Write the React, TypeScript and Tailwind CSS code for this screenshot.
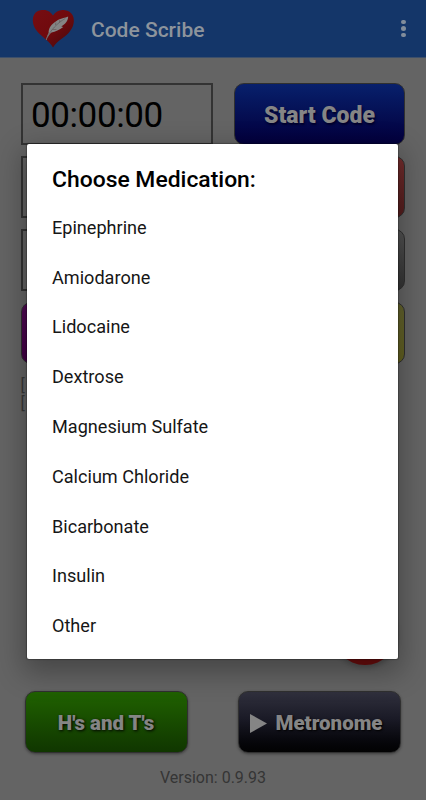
import React from "react";

const medications = [
  "Epinephrine",
  "Amiodarone",
  "Lidocaine",
  "Dextrose",
  "Magnesium Sulfate",
  "Calcium Chloride",
  "Bicarbonate",
  "Insulin",
  "Other",
];

function HeartLogo() {
  return (
    <svg className="ml-8 h-[38px] w-[43px] shrink-0" viewBox="0 0 44 38" preserveAspectRatio="none">
      <defs>
        <linearGradient id="heart" x1="0" y1="0" x2="1" y2="1">
          <stop offset="0" stopColor="#760d12" />
          <stop offset="0.5" stopColor="#700a0d" />
          <stop offset="1" stopColor="#420a0c" />
        </linearGradient>
      </defs>
      <path
        d="M21.5 37.5C18 31 11 28 5 21C-1 14-.5 4 6 1C12-1.5 18 0 21.5 5.5C25 0 32-1.5 38 1.5C44 5 44.5 14 39 21C34 28 26 30 21.5 37.5Z"
        fill="url(#heart)"
      />
      <path d="M14.2 30C15 27 15.8 25 17 23C16.8 18 20 14 25 11C29 8 34 8 37 6.5C37 11 34 14 30 16.5L32 17C28 20 24 21.5 20 22.5C17.5 24.5 16 27 14.8 30Z" fill="#858585" />
      <path d="M15 28.5C19 20 26 13 34 8.5" fill="none" stroke="#555" strokeWidth="0.6" />
      <path d="M24 15l.5-2.5M28 12.5l.5-2.5M21 19.5l4 0" stroke="#5a4545" strokeWidth="0.5" />
    </svg>
  );
}

function Header() {
  return (
    <header className="flex h-[58px] items-center border-b border-[#3c4f6b] bg-[#143669]">
      <HeartLogo />
      <h1 className="ml-4 flex-1 pt-[3px] text-[21px] leading-6 font-medium text-[#8d949c]">Code Scribe</h1>
      <div className="mr-[20.5px] flex flex-col gap-[2px]">
        <i className="size-[4.5px] rounded-full bg-[#818d9b]" />
        <i className="size-[4.5px] rounded-full bg-[#818d9b]" />
        <i className="size-[4.5px] rounded-full bg-[#818d9b]" />
      </div>
    </header>
  );
}

const action = "flex h-[62px] items-center justify-center rounded-[10px] border border-[#303030] font-black text-[#858585]";
const field = "h-[62px] border-2 border-[#333]";

function MedicationDialog() {
  return (
    <section
      role="dialog"
      className="absolute top-[144px] left-[27px] h-[514.5px] w-[371px] rounded-[2px] bg-white px-[25px] pt-[20px] text-black shadow-[0_10px_28px_4px_rgba(0,0,0,0.3),0_0_1px_1px_rgba(0,0,0,0.25)]"
    >
      <h2 className="h-[38.5px] text-[22.9px] leading-[31px] font-medium whitespace-nowrap">Choose Medication:</h2>
      <ul>
        {medications.map((name) => (
          <li key={name} className="flex h-[49.8px] items-center text-[18.1px] text-[#161616]">
            {name}
          </li>
        ))}
      </ul>
    </section>
  );
}

export default function App() {
  return (
    <main className="relative flex h-[800px] w-[426px] flex-col overflow-hidden bg-[#646464] font-['Roboto',sans-serif]">
      <Header />
      <div className="mt-[25px] grid grid-cols-[192px_171px] gap-x-[21px] gap-y-[11px] pl-[21px]">
        <div className={`${field} flex items-center pt-[4px] pl-[8px] text-[35px] tracking-[-0.4px] text-black`}>00:00:00</div>
        <button className={`${action} bg-linear-to-b from-[#08206c] to-[#03003c] pt-[4px] text-[23px] [text-shadow:1px_2px_2px_#00002a]`}>
          Start Code
        </button>
        <div className={field} />
        <div className={`${action} bg-linear-to-b from-[#742d2d] to-[#541d1d]`} />
        <div className={field} />
        <div className={`${action} bg-linear-to-b from-[#535353] to-[#343434]`} />
        <div className={`${action} bg-linear-to-b from-[#500a54] to-[#420045]`} />
        <div className={`${action} bg-linear-to-b from-[#62622d] to-[#626020]`} />
      </div>
      <div className="mt-[13px] pl-[20.5px] text-[16px] leading-[18px] text-[#373737]">
        <p>[</p>
        <p>[</p>
      </div>
      <div className="mt-auto mr-[28px] size-[66px] shrink-0 self-end rounded-full bg-[#6b0c0c] shadow-[0_3px_5px_rgba(0,0,0,0.2)]" />
      <div className="mt-[26px] flex justify-between pr-[25px] pl-[25px] text-[20.5px]">
        <button className={`${action} w-[163px] bg-linear-to-b from-[#206200] to-[#103600] pt-[2px] pr-[1px] shadow-[0_1px_3px_rgba(0,0,0,0.4)] [text-shadow:1px_1px_3px_#000]`}>
          H's and T's
        </button>
        <button className={`${action} w-[163px] gap-[8px] bg-linear-to-b from-[#30303d] via-[#1a1a26] via-45% to-[#020203] pt-[2px] pr-[6px] shadow-[0_1px_3px_rgba(0,0,0,0.4)] [text-shadow:1px_1px_2px_#000]`}>
          <svg className="h-[19px] w-[17px]" viewBox="0 0 17 19">
            <path d="M0 0L17 9.5L0 19Z" fill="#858585" />
          </svg>
          Metronome
        </button>
      </div>
      <footer className="h-[47px] pt-[13px] text-center text-[16px] leading-6 text-[#353535]">Version: 0.9.93</footer>
      <MedicationDialog />
    </main>
  );
}
